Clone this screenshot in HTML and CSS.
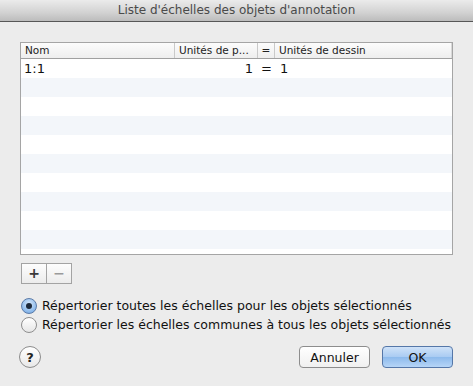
FILE: index.html
```html
<!DOCTYPE html>
<html lang="fr">
<head>
<meta charset="UTF-8">
<meta name="viewport" content="width=device-width, initial-scale=1.0">
<title>Liste d'échelles des objets d'annotation</title>
<link rel="stylesheet" href="styles.css">
</head>
<body>
  <div class="window">
    <div class="titlebar">Liste d'échelles des objets d'annotation</div>

    <div class="content">
      <div class="table">
        <div class="thead">
          <div class="th">Nom</div>
          <div class="th">Unités de p...</div>
          <div class="th th-eq">=</div>
          <div class="th th-last">Unités de dessin</div>
        </div>
        <div class="tbody">
          <div class="tr">
            <div class="td">1:1</div>
            <div class="td td-num">1</div>
            <div class="td td-eq">=</div>
            <div class="td td-draw">1</div>
          </div>
          <div class="tr"></div>
          <div class="tr"></div>
          <div class="tr"></div>
          <div class="tr"></div>
          <div class="tr"></div>
          <div class="tr"></div>
          <div class="tr"></div>
          <div class="tr"></div>
          <div class="tr"></div>
          <div class="tr"></div>
        </div>
      </div>

      <div class="addremove">
        <button class="seg" type="button">+</button>
        <button class="seg seg-minus" type="button">&minus;</button>
      </div>

      <div class="options">
        <label class="option">
          <span class="radio checked"></span>
          Répertorier toutes les échelles pour les objets sélectionnés
        </label>
        <label class="option">
          <span class="radio"></span>
          Répertorier les échelles communes à tous les objets sélectionnés
        </label>
      </div>

      <div class="footer">
        <button class="help" type="button">?</button>
        <div class="actions">
          <button class="btn" type="button">Annuler</button>
          <button class="btn btn-default" type="button">OK</button>
        </div>
      </div>
    </div>
  </div>
</body>
</html>
```

FILE: styles.css
```css
body {
  margin: 0;
  padding: 0;
  font-family: "DejaVu Sans", sans-serif;
  background: #ececec;
}

.window {
  width: 473px;
  height: 386px;
  background: #ececec;
  overflow: hidden;
}

.titlebar {
  height: 21px;
  line-height: 21px;
  border-bottom: 1px solid #575757;
  background: linear-gradient(#ebebeb, #d2d2d2 60%, #bcbcbc);
  color: #4a4a4a;
  text-align: center;
  font-size: 12px;
}

.content {
  padding: 20px 20px 0 20px;
}

/* table */
.table {
  width: 431px;
  border: 1px solid #a5a5a5;
  background: #fff;
}

.thead {
  display: grid;
  grid-template-columns: 154px 83px 17px 1fr;
  height: 15px;
  border-bottom: 1px solid #a0a0a0;
  background: linear-gradient(#fcfcfc, #eeeeee);
  font-size: 10.5px;
  line-height: 15px;
  color: #222;
}

.th {
  padding-left: 4px;
  border-right: 1px solid #c9c9c9;
  white-space: nowrap;
  overflow: hidden;
}

.th-eq {
  padding-left: 0;
  text-align: center;
}

.th-last {
  border-right-color: #d8d8d8;
}

.tbody {
  height: 195px;
  overflow: hidden;
}

.tr {
  display: grid;
  grid-template-columns: 154px 83px 17px 1fr;
  height: 19px;
  line-height: 19px;
  font-size: 13px;
  color: #111;
}

.tr:nth-child(even) {
  background: #f3f6fa;
}

.td {
  padding-left: 3px;
}

.td-num {
  text-align: right;
  padding-right: 5px;
}

.td-eq {
  padding-left: 0;
  text-align: center;
}

.td-draw {
  padding-left: 5px;
}

/* + / - */
.addremove {
  display: flex;
  margin-top: 8px;
  margin-left: 1px;
}

.seg {
  width: 26px;
  height: 21px;
  padding: 0;
  border: 1px solid #a3a3a3;
  background: linear-gradient(#fdfdfd, #ececec);
  font-family: "DejaVu Sans", sans-serif;
  font-size: 14px;
  font-weight: bold;
  line-height: 17px;
  color: #3a3a3a;
}

.seg-minus {
  margin-left: -1px;
  color: #9a9a9a;
}

/* radios */
.options {
  display: flex;
  flex-direction: column;
  margin-top: 12px;
}

.option {
  display: flex;
  align-items: center;
  gap: 5px;
  height: 19px;
  font-size: 12.5px;
  color: #111;
  white-space: nowrap;
}

.radio {
  width: 14px;
  height: 14px;
  flex: none;
  margin-left: 1px;
  border: 1px solid #8e8e8e;
  border-radius: 50%;
  background: linear-gradient(#ffffff, #e6e6e6);
  display: flex;
  align-items: center;
  justify-content: center;
}

.radio.checked {
  border-color: #5b7ba8;
  background: radial-gradient(circle at 50% 35%, #d6e8fb, #8ab8ea 70%, #6b9fdb);
}

.radio.checked::after {
  content: "";
  width: 6px;
  height: 6px;
  border-radius: 50%;
  background: #1d2a3b;
}

/* footer */
.footer {
  display: flex;
  justify-content: space-between;
  align-items: center;
  margin-top: 12px;
}

.help {
  width: 22px;
  height: 22px;
  margin-left: -1px;
  padding: 0;
  border: 1px solid #8c8c8c;
  border-radius: 50%;
  background: linear-gradient(#ffffff, #e8e8e8);
  font-family: "DejaVu Sans", sans-serif;
  font-size: 13px;
  font-weight: bold;
  color: #222;
}

.actions {
  display: flex;
  gap: 12px;
}

.btn {
  width: 71px;
  height: 22px;
  padding: 0;
  border: 1px solid #8d8d8d;
  border-radius: 4px;
  background: linear-gradient(#ffffff, #f0f0f0);
  font-family: "DejaVu Sans", sans-serif;
  font-size: 12.5px;
  color: #111;
}

.btn-default {
  border-color: #5577a8;
  background: linear-gradient(#cfe2f8, #a9cbf2 50%, #8dbaec 51%, #b6d5f7);
}
```
